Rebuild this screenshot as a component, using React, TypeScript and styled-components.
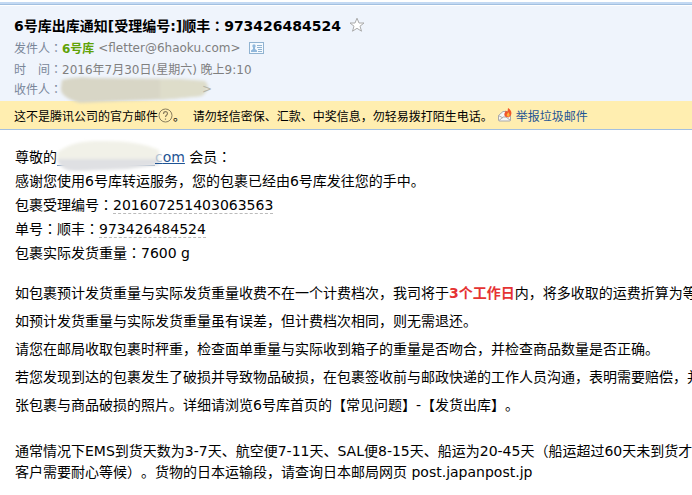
import React from "react";
import styled, { createGlobalStyle } from "styled-components";

const Global = createGlobalStyle`
  * { box-sizing: border-box; }
  body {
    margin: 0;
    background: #fff;
    color: #000;
    font-family: "DejaVu Sans", "Noto Sans CJK SC", sans-serif;
    text-spacing-trim: space-all;
    overflow: hidden;
  }
`;

const Mail = styled.main`
  overflow: hidden;
`;

const TopEdge = styled.div`
  height: 6px;
  background: linear-gradient(#fff 0 2px, #c3d9f3 2px 4px, #a3c0e0 4px 5px, #fff 5px);
`;

const Header = styled.header`
  background: #eff4fc;
  padding: 7px 14px 3px;
`;

const Title = styled.h1`
  display: flex;
  align-items: center;
  gap: 8px;
  margin: 0;
  height: 24px;
  font-size: 14px;
  white-space: nowrap;
`;

const StarButton = styled.button`
  display: flex;
  padding: 0;
  border: 0;
  background: none;
`;

const Meta = styled.div<{ $height: number }>`
  display: flex;
  align-items: center;
  height: ${(p) => p.$height}px;
  font-size: 12px;
  color: #7f7f7f;
  white-space: pre;
`;

const Label = styled.span`
  width: 48px;
  color: #798699;
`;

const Sender = styled.b`
  color: #5fa207;
`;

const CardButton = styled(StarButton)`
  margin-left: 8px;
`;

const Notice = styled.aside`
  display: flex;
  align-items: center;
  height: 29px;
  padding: 0 14px;
  border-bottom: 1px solid #a3c0e0;
  background: #ffeeb0;
  font-size: 12px;
  white-space: pre;
`;

const Report = styled.a`
  display: flex;
  align-items: center;
  gap: 4px;
  margin-left: 5px;
  color: #1e5494;
  text-decoration: none;
`;

const Body = styled.article`
  padding: 15px;
  font-size: 14px;
`;

const Block = styled.section<{ $line: number; $gap?: number }>`
  margin-bottom: ${(p) => p.$gap ?? 0}px;
  line-height: ${(p) => p.$line}px;
  white-space: nowrap;
`;

const Line = styled.p`
  margin: 0;
`;

const Centered = styled.span`
  font-family: "Noto Sans CJK JP", sans-serif;
  line-height: 1;
`;

const Dashed = styled.span`
  border-bottom: 1px dashed #bbb;
`;

const Alert = styled.strong`
  color: #e53333;
`;

const Address = styled.a`
  color: #1e5494;
`;

const Faded = styled.span`
  color: #b4c3d3;
`;

const FadedBracket = styled.span`
  color: #b5b5a8;
`;

const Smudge = styled.svg`
  display: inline-block;
  overflow: visible;
  vertical-align: middle;
`;

const Colon = () => <Centered lang="ja">：</Centered>;

const Star = () => (
  <svg width="16" height="16" viewBox="0 0 16 16" aria-hidden="true">
    <path d="M8 1.2 10 6h5l-4 3.2 1.5 5L8 11.3l-4.5 2.9 1.5-5L1 6h5z" fill="#fff" stroke="#aaa" />
  </svg>
);

const Card = () => (
  <svg width="15" height="12" viewBox="0 0 15 12" aria-hidden="true">
    <rect x=".5" y=".5" width="14" height="11" fill="#f5faff" stroke="#91b3d1" />
    <circle cx="5" cy="4" r="1.7" fill="#91b8dc" />
    <path d="M2 10V8.5L4 7V5h2v2l2 1.5V10z" fill="#91b8dc" />
    <path d="M8 3.5h5M8 5.5h5M9 7.5h4M9 9.5h4" stroke="#91b3d1" />
  </svg>
);

const Help = () => (
  <svg width="15" height="15" viewBox="0 0 15 15" aria-hidden="true">
    <circle cx="7.5" cy="7.5" r="6.5" fill="none" stroke="#8a7e5e" />
    <path d="M5.5 6c0-3 4-3 4-.5 0 1.7-2 1.7-2 3.5M7.5 10.5v1.3" fill="none" stroke="#8a7e5e" strokeWidth="1.2" />
  </svg>
);

const HotMail = () => (
  <svg width="14" height="14" viewBox="0 0 14 14" aria-hidden="true">
    <path d="M.5 7.5 5 3.500h7.500V12q0 1-1 1h-10q-1 0-1-1z" fill="#f7f7f7" stroke="#aaa" />
    <path d="m1 12.500 4-3.500h3l4.500 3.500M.5 7.500 5 10" fill="none" stroke="#aaa" />
    <path d="M7 8.500C5 5 8 4.500 7.500 2.500l2 1.200L10 0c3 1.500 4.500 5 2.500 8l-2 1.500z" fill="#f0562b" />
    <path d="M9 8c-1-2 1-2 1-4 2 2 2 3 .5 5z" fill="#ffb03a" />
  </svg>
);

export default function App() {
  return (
    <>
      <Global />
      <Mail lang="zh-CN">
        <TopEdge />
        <Header>
          <Title>
            <span>6号库出库通知[受理编号:]顺丰<Colon />973426484524</span>
            <StarButton aria-label="星标"><Star /></StarButton>
          </Title>
          <Meta $height={21}>
            <Label>发件人<Colon /></Label>
            <Sender>6号库</Sender>
            <span> &lt;fletter@6haoku.com&gt;</span>
            <CardButton aria-label="联系人"><Card /></CardButton>
          </Meta>
          <Meta $height={21}>
            <Label>时　间<Colon /></Label>
            <time dateTime="2016-07-30T21:10">2016年7月30日(星期六) 晚上9:10</time>
          </Meta>
          <Meta $height={19}>
            <Label>收件人<Colon /></Label>
            <Smudge width="140" height="19" viewBox="0 0 140 19" aria-hidden="true">
              <defs>
                <filter id="soft"><feGaussianBlur stdDeviation="1.5" /></filter>
              </defs>
              <g filter="url(#soft)">
                <path d="M0 1Q15-3 30-1L118 0 143 2Q150 10 139 17L110 20 60 22 18 24Q-3 18-1 8z" fill="#d8d6c6" />
                <path d="M98 0 142 2Q149 9 140 17L98 21z" fill="#deddca" />
              </g>
            </Smudge>
            <FadedBracket>&gt;</FadedBracket>
          </Meta>
        </Header>
        <Notice>
          <span>这不是腾讯公司的官方邮件</span>
          <Help />
          <span>。  请勿轻信密保、汇款、中奖信息，勿轻易拨打陌生电话。</span>
          <Report href="#report"><HotMail />举报垃圾邮件</Report>
        </Notice>
        <Body>
          <Block $line={24} $gap={14}>
            <Line>
              尊敬的
              <Address href="#address">
                <Smudge width="98" height="22" viewBox="0 0 98 22" aria-hidden="true">
                  <path d="M0 18.5h98" stroke="#7c98b8" />
                  <g filter="url(#soft)">
                    <path d="M1 5Q15-6 40-6 80-7 102 3V17L76 21 20 24Q-4 18 1 5z" fill="#f1f1e8" />
                    <path d="M0 12h102v6L70 22 18 24Q3 24 0 12z" fill="#dfe0e3" />
                  </g>
                </Smudge>
                <Faded>c</Faded>om
              </Address>{" "}
              会员<Colon />
            </Line>
            <Line>感谢您使用6号库转运服务，您的包裹已经由6号库发往您的手中。</Line>
            <Line>包裹受理编号<Colon /><Dashed>201607251403063563</Dashed></Line>
            <Line>单号<Colon />顺丰<Colon /><Dashed>973426484524</Dashed></Line>
            <Line>包裹实际发货重量<Colon />7600 g</Line>
          </Block>
          <Block $line={28} $gap={22}>
            <Line>如包裹预计发货重量与实际发货重量收费不在一个计费档次，我司将于<Alert>3个工作日</Alert>内，将多收取的运费折算为等</Line>
            <Line>如预计发货重量与实际发货重量虽有误差，但计费档次相同，则无需退还。</Line>
            <Line>请您在邮局收取包裹时秤重，检查面单重量与实际收到箱子的重量是否吻合，并检查商品数量是否正确。</Line>
            <Line>若您发现到达的包裹发生了破损并导致物品破损，在包裹签收前与邮政快递的工作人员沟通，表明需要赔偿，并</Line>
            <Line>张包裹与商品破损的照片。详细请浏览6号库首页的【常见问题】-【发货出库】。</Line>
          </Block>
          <Block $line={21}>
            <Line>通常情况下EMS到货天数为3-7天、航空便7-11天、SAL便8-15天、船运为20-45天（船运超过60天未到货才</Line>
            <Line>客户需要耐心等候）。货物的日本运输段，请查询日本邮局网页 post.japanpost.jp</Line>
          </Block>
        </Body>
      </Mail>
    </>
  );
}
